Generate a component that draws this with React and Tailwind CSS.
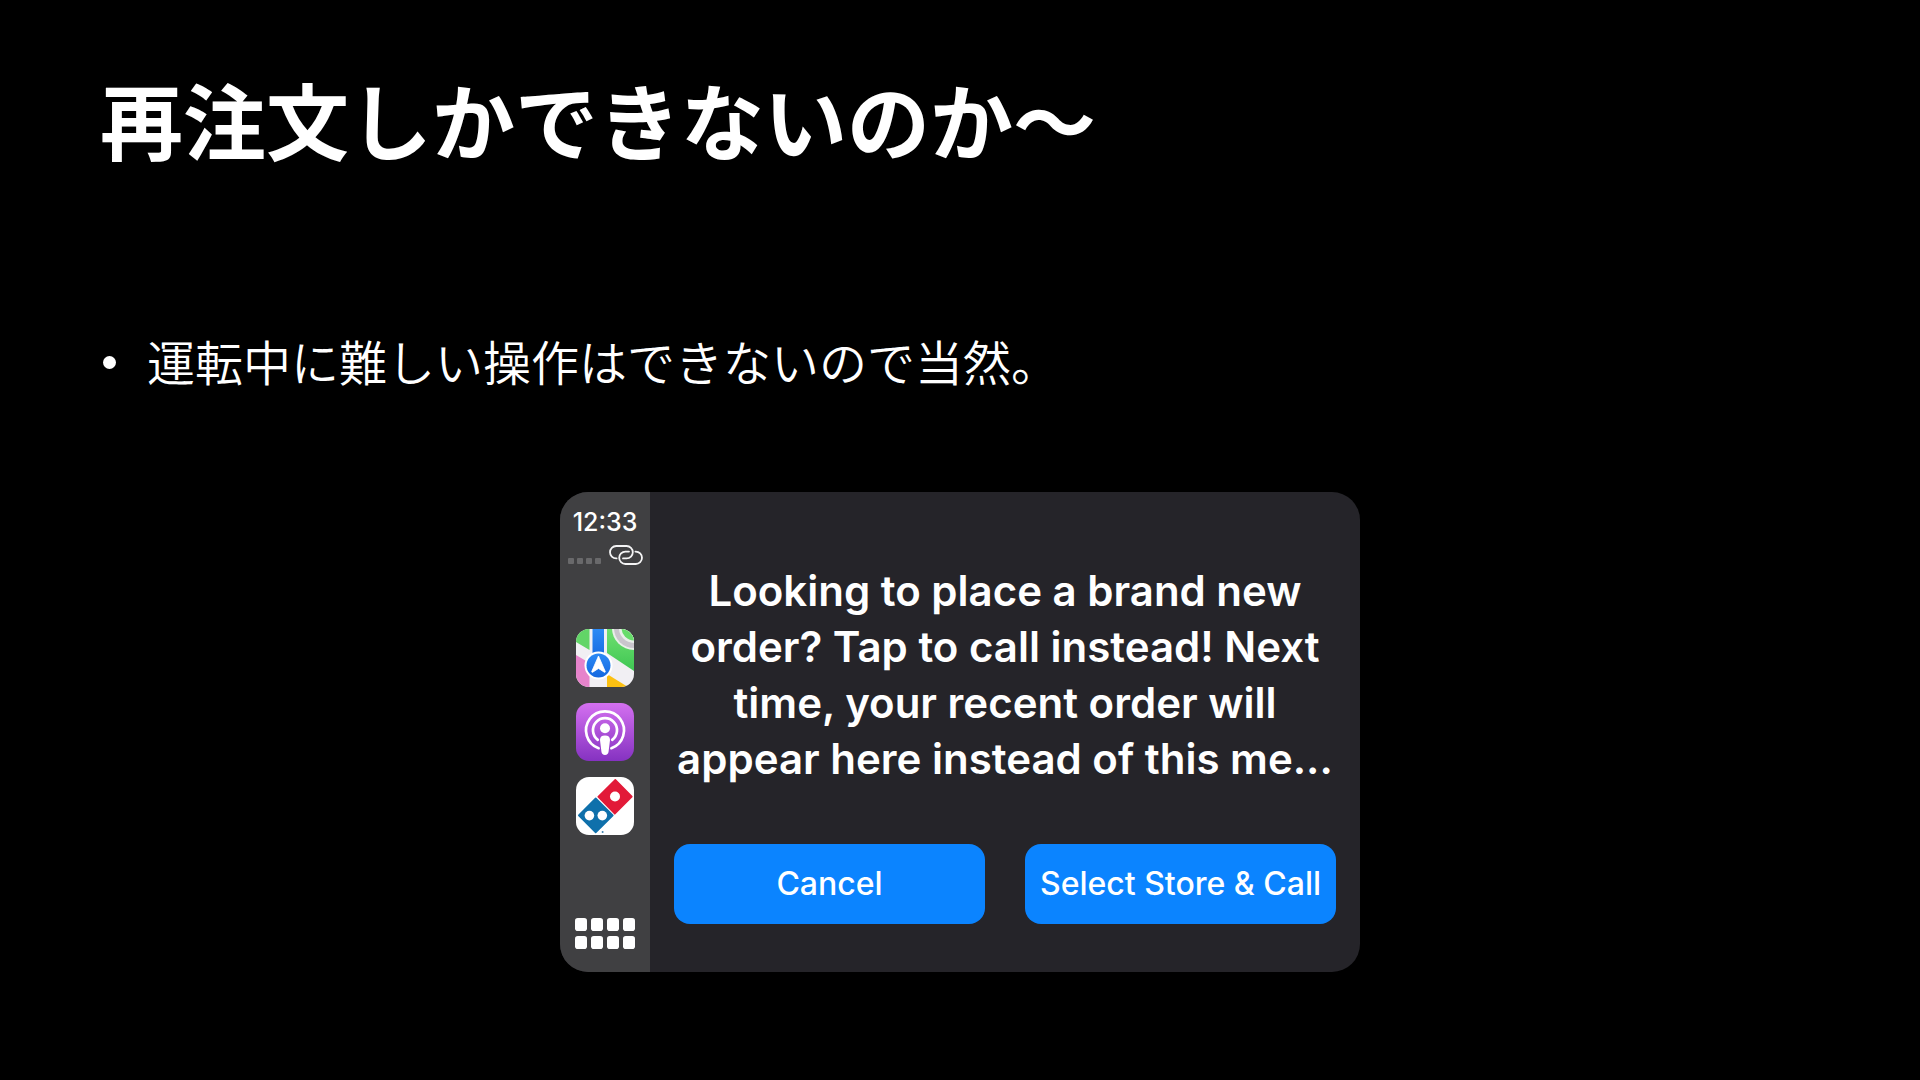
const messageLines = [
  "Looking to place a brand new",
  "order? Tap to call instead! Next",
  "time, your recent order will",
  "appear here instead of this me...",
];

function LinkIcon() {
  return (
    <svg viewBox="0 0 34 20" className="h-5 w-[34px]" fill="none" stroke="#f4f4f5" strokeWidth="1.8" strokeLinecap="round">
      <path d="M7.6 13.4H7.2A6.2 6.2 0 0 1 7.2 1H17.6A6.2 6.2 0 0 1 17.6 13.4H14" />
      <path d="M26.4 6.6H26.8A6.2 6.2 0 0 1 26.8 19H16.4A6.2 6.2 0 0 1 16.4 6.6H20" />
    </svg>
  );
}

function MapsIcon() {
  return (
    <svg viewBox="0 0 58 58" className="size-[58px] rounded-[13px]">
      <defs>
        <linearGradient id="maps-green" x1="0" y1="0" x2="0" y2="1">
          <stop offset="0" stopColor="#6fe070" />
          <stop offset="1" stopColor="#3fc653" />
        </linearGradient>
        <linearGradient id="maps-blue" x1="0" y1="0" x2="0" y2="1">
          <stop offset="0" stopColor="#2b8af5" />
          <stop offset="1" stopColor="#1568e0" />
        </linearGradient>
      </defs>
      <rect width="58" height="58" fill="#f1eff3" />
      <path d="M0 0H13.5V21L0 13Z" fill="#62d567" />
      <path d="M31 0H58V42L31 24Z" fill="url(#maps-green)" />
      <circle cx="58" cy="-1" r="22" fill="#e9efe9" />
      <circle cx="58" cy="-1" r="20" fill="#c9c5cc" />
      <circle cx="58" cy="-1" r="15" fill="#e9efe9" />
      <circle cx="58" cy="-1" r="12.5" fill="#67dc6a" />
      <path d="M0 26L13.5 34V58H0Z" fill="#e683cb" />
      <path d="M31 45L52 58H31Z" fill="#fcc012" />
      <rect x="16.5" width="11.5" height="30" fill="url(#maps-blue)" />
      <circle cx="22.5" cy="36.5" r="14" fill="#fff" />
      <circle cx="22.5" cy="36.5" r="12" fill="url(#maps-blue)" />
      <path d="M22.5 27L29.3 42.6Q29.3 43.6 28.3 43.2L22.5 39.4L16.7 43.2Q15.7 43.6 15.7 42.6Z" fill="#fff" stroke="#fff" strokeWidth=".8" strokeLinejoin="round" />
    </svg>
  );
}

function PodcastsIcon() {
  return (
    <svg viewBox="0 0 58 58" className="size-[58px] rounded-[13px]">
      <defs>
        <linearGradient id="podcasts-bg" x1="0" y1="0" x2="0" y2="1">
          <stop offset="0" stopColor="#d470f0" />
          <stop offset="1" stopColor="#8532c1" />
        </linearGradient>
      </defs>
      <rect width="58" height="58" fill="url(#podcasts-bg)" />
      <g fill="none" stroke="#fff" strokeWidth="2.7" strokeLinecap="round">
        <path d="M22.6 45.2A19 19 0 1 1 35.4 45.2" />
        <path d="M21.8 36.8A12 12 0 1 1 36.2 36.8" />
      </g>
      <circle cx="29" cy="25.2" r="5" fill="#fff" />
      <path d="M24 37Q24 32.6 29 32.6T34 37L32.6 48.6Q32.2 52 29 52T25.4 48.6Z" fill="#fff" />
    </svg>
  );
}

function DominosIcon() {
  return (
    <svg viewBox="0 0 58 58" className="size-[58px] rounded-[13px]">
      <rect width="58" height="58" fill="#fff" />
      <path d="M39.3 2.8L55.8 19.6L38.8 36.8L22.2 19.8Z" fill="#e21a38" stroke="#e21a38" strokeWidth="1.6" strokeLinejoin="round" />
      <path d="M19.7 21.4L36.8 38.4L19.7 55.4L2.8 38.4Z" fill="#0f70ab" stroke="#0f70ab" strokeWidth="1.6" strokeLinejoin="round" />
      <circle cx="39" cy="19.5" r="5" fill="#fff" />
      <circle cx="13.4" cy="38.6" r="4.8" fill="#fff" />
      <circle cx="26.3" cy="38.6" r="4.8" fill="#fff" />
      <circle cx="26.6" cy="55" r="1" fill="#3d83b0" />
    </svg>
  );
}

function GridIcon() {
  return (
    <svg viewBox="0 0 60 31" className="h-[31px] w-[60px]" fill="#fff">
      {[0, 16, 32, 48].map((x) => (
        <g key={x}>
          <rect x={x} width="12" height="13" rx="2.8" />
          <rect x={x} y="18" width="12" height="13" rx="2.8" />
        </g>
      ))}
    </svg>
  );
}

function Sidebar() {
  return (
    <aside className="flex w-[90px] shrink-0 flex-col items-center bg-[#404042] pt-[18px] pb-[23px]">
      <time className="text-[25px] leading-6 font-medium text-white">12:33</time>
      <div className="mt-[11px] flex items-end gap-2">
        <div className="mb-px flex gap-[3px]">
          {[0, 1, 2, 3].map((dot) => (
            <span key={dot} className="size-1.5 rounded-[1px] bg-[#69696b]" />
          ))}
        </div>
        <LinkIcon />
      </div>
      <nav className="mt-16 flex flex-col gap-4">
        <button type="button" aria-label="Maps"><MapsIcon /></button>
        <button type="button" aria-label="Podcasts"><PodcastsIcon /></button>
        <button type="button" aria-label="Domino's"><DominosIcon /></button>
      </nav>
      <button type="button" aria-label="Home" className="mt-auto">
        <GridIcon />
      </button>
    </aside>
  );
}

function CallButton({ children }) {
  return (
    <button
      type="button"
      className="h-20 flex-1 basis-0 rounded-2xl bg-[#0b84ff] text-[32px] font-medium whitespace-nowrap text-white"
    >
      {children}
    </button>
  );
}

export default function App() {
  return (
    <main
      lang="ja"
      className="min-h-screen bg-black px-[100px] pt-17 pb-[108px] font-['Noto_Sans_CJK_JP',sans-serif] text-white"
    >
      <h1 className="text-[83px] leading-[100px] font-bold">再注文しかできないのか〜</h1>

      <ul className="mt-40">
        <li className="flex items-center gap-[31px] text-5xl leading-16 font-[350]">
          <span className="mt-1 ml-[3px] size-[13px] rounded-full bg-white" />
          運転中に難しい操作はできないので当然。
        </li>
      </ul>

      <section className="mx-auto mt-25 flex min-h-[480px] w-full max-w-[800px] overflow-hidden rounded-[28px] bg-[#252429] font-['Inter',sans-serif]">
        <Sidebar />
        <div className="flex flex-1 flex-col justify-between px-6 pt-[71px] pb-12">
          <p className="text-center text-[42px] leading-14 font-semibold whitespace-nowrap">
            {messageLines.map((line) => (
              <span key={line} className="block">{line}</span>
            ))}
          </p>
          <div className="flex gap-10">
            <CallButton>Cancel</CallButton>
            <CallButton>Select Store &amp; Call</CallButton>
          </div>
        </div>
      </section>
    </main>
  );
}
